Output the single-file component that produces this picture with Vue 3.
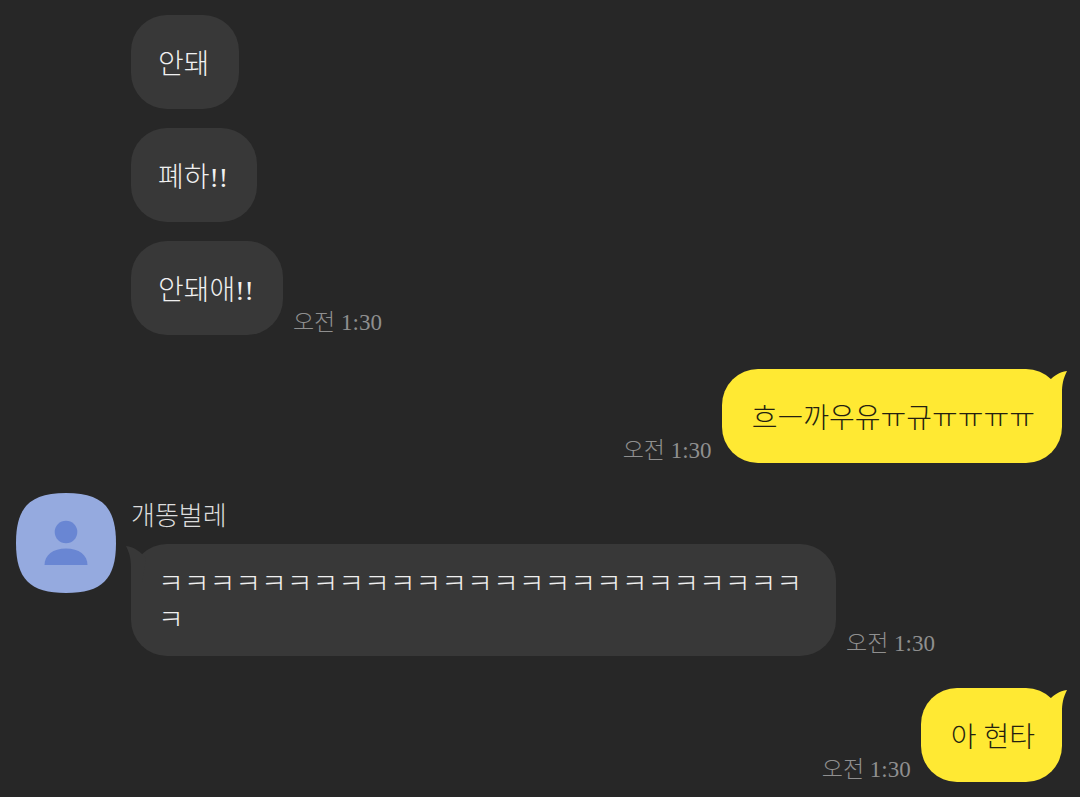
<script setup>
const groups = [
  { id: 1, side: 'other', messages: [{ text: '안돼' }, { text: '폐하!!' }, { text: '안돼애!!', time: '오전 1:30' }] },
  { id: 2, side: 'mine', tail: true, messages: [{ text: '흐ㅡ까우유ㅠ규ㅠㅠㅠㅠ', time: '오전 1:30' }] },
  { id: 3, side: 'other', tail: true, name: '개똥벌레', messages: [{ text: 'ㅋ'.repeat(26), time: '오전 1:30' }] },
  { id: 4, side: 'mine', tail: true, messages: [{ text: '아 현타', time: '오전 1:30' }] },
]
</script>

<template>
  <main class="chat" lang="ko">
    <section v-for="group in groups" :key="group.id" class="group" :class="[group.side, { named: group.name }]">
      <div v-if="group.side === 'other'" class="avatar-column">
        <svg v-if="group.name" class="avatar" viewBox="0 0 100 100" role="img" :aria-label="group.name">
          <path d="M50 0C86 0 100 14 100 50S86 100 50 100S0 86 0 50S14 0 50 0Z" fill="#95aadf" />
          <circle cx="50" cy="39" r="11.3" fill="#6986d3" />
          <path d="M28.500 72C28.500 62 37 55.500 50 55.500S71.500 62 71.500 72Z" fill="#6986d3" />
        </svg>
      </div>
      <div class="content">
        <h2 v-if="group.name" class="name">{{ group.name }}</h2>
        <div v-for="(message, index) in group.messages" :key="index" class="message">
          <div class="bubble">
            <svg v-if="group.tail && index === 0" class="tail" viewBox="0 0 20 36" aria-hidden="true">
              <path d="M20 0C12 1 7 5 3 9L0 12L4 36H15V22C15 14 16 8 20 0Z" />
            </svg>
            <p>{{ message.text }}</p>
          </div>
          <time v-if="message.time" datetime="01:30">{{ message.time }}</time>
        </div>
      </div>
    </section>
  </main>
</template>

<style scoped>
.chat {
  display: flex;
  flex-direction: column;
  gap: 32px;
  min-height: 100vh;
  box-sizing: border-box;
  padding: 15px 18px 15px 16px;
  background: #272727;
  color: #f0f0f0;
  font-family: "Liberation Serif", "Noto Sans CJK KR", serif;
  font-weight: 300;
}
.group {
  display: flex;
}
.group:first-child {
  margin-bottom: 2px;
}
.avatar-column {
  flex: 0 0 100px;
  margin-right: 15px;
}
.avatar {
  display: block;
  width: 100px;
  height: 100px;
}
.content {
  display: flex;
  flex: 1;
  flex-direction: column;
  gap: 19px;
  min-width: 0;
}
.named {
  margin-top: -2px;
}
.named .content {
  gap: 3px;
}
.name {
  margin: 0;
  font-size: 26px;
  line-height: 48px;
  font-weight: 300;
  color: #dcdcdc;
}
.message {
  display: flex;
  align-items: flex-end;
  gap: 10px;
}
.mine .message {
  flex-direction: row-reverse;
}
.bubble {
  position: relative;
  display: flex;
  align-items: center;
  box-sizing: border-box;
  min-height: 94px;
  max-width: calc(100% - 226px);
  padding: 23px 29px 17px 27px;
  border-radius: 36px;
  background: #383838;
}
.mine .bubble {
  padding: 23px 27px 17px 30px;
  background: #ffe933;
  color: #241f10;
}
.bubble p {
  margin: 0;
  font-size: 28px;
  line-height: 36px;
  overflow-wrap: anywhere;
}
.tail {
  position: absolute;
  top: 2px;
  width: 20px;
  height: 36px;
  fill: #383838;
}
.mine .tail {
  right: -5px;
  fill: #ffe933;
}
.other .tail {
  left: -5px;
  transform: scaleX(-1);
}
time {
  flex: none;
  font-size: 23px;
  line-height: 24px;
  color: #8f8f8f;
}
</style>

<style>
body {
  background: #272727;
}
</style>
